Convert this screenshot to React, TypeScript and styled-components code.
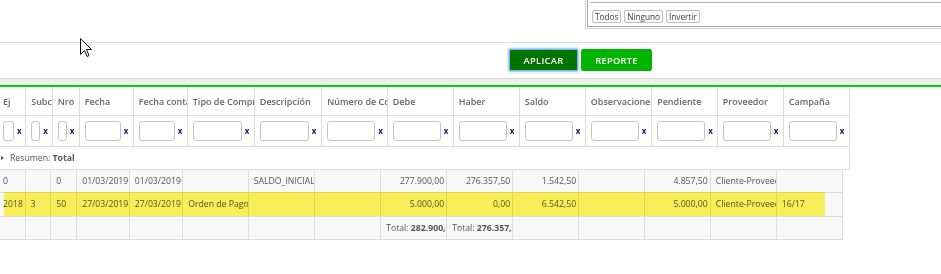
import React from 'react';
import styled, { createGlobalStyle } from 'styled-components';

type Col = { label: string; w: number; iw: number };

const headCols: Col[] = [
	{ label: 'Ej', w: 27.7, iw: 9 },
	{ label: 'Subcuenta', w: 26.6, iw: 7 },
	{ label: 'Nro', w: 27, iw: 7 },
	{ label: 'Fecha', w: 54, iw: 34 },
	{ label: 'Fecha contable', w: 54, iw: 34 },
	{ label: 'Tipo de Comprobante', w: 67, iw: 47 },
	{ label: 'Descripción', w: 67.4, iw: 47 },
	{ label: 'Número de Comprobante', w: 65.6, iw: 46 },
	{ label: 'Debe', w: 66, iw: 46 },
	{ label: 'Haber', w: 66, iw: 46 },
	{ label: 'Saldo', w: 66, iw: 46 },
	{ label: 'Observaciones', w: 66.4, iw: 46 },
	{ label: 'Pendiente', w: 65.6, iw: 46 },
	{ label: 'Proveedor', w: 66, iw: 46 },
	{ label: 'Campaña', w: 66, iw: 46 },
];

const bodyWidths = [27, 25.7, 26, 52.6, 53.4, 65.6, 66, 66.4, 66, 66, 66, 65.6, 66, 66, 66];
const numeric = [8, 9, 10, 12];

const rows: string[][] = [
	['0', '', '0', '01/03/2019', '01/03/2019', '', 'SALDO_INICIAL', '', '277.900,00', '276.357,50', '1.542,50', '', '4.857,50', 'Cliente-Proveedor', ''],
	['2018', '3', '50', '27/03/2019', '27/03/2019', 'Orden de Pago', '', '', '5.000,00', '0,00', '6.542,50', '', '5.000,00', 'Cliente-Proveedor', '16/17'],
];

const totals: Record<number, string> = { 8: '282.900,00', 9: '276.357,50' };

const App: React.FC = () => {
	return (
		<Page>
			<GlobalStyle />
			<TopBar>
				<ChoicePanel>
					<ChoiceInner>
						<ListStub />
						<ChoiceButtons>
							<SmallButton>Todos</SmallButton>
							<SmallButton>Ninguno</SmallButton>
							<SmallButton>Invertir</SmallButton>
						</ChoiceButtons>
					</ChoiceInner>
				</ChoicePanel>
			</TopBar>
			<ActionBar>
				<ActionButton $dark>APLICAR</ActionButton>
				<ActionButton>REPORTE</ActionButton>
			</ActionBar>
			<Band />
			<GridTable>
				<colgroup>
					{headCols.map((c) => (
						<col key={c.label} style={{ width: c.w }} />
					))}
				</colgroup>
				<tbody>
					<tr>
						{headCols.map((c) => (
							<HeadCell key={c.label}>
								<Clip>{c.label}</Clip>
							</HeadCell>
						))}
					</tr>
					<tr>
						{headCols.map((c) => (
							<FilterCell key={c.label}>
								<FilterBox>
									<FilterInput style={{ width: c.iw }} />
									<Clear>x</Clear>
								</FilterBox>
							</FilterCell>
						))}
					</tr>
				</tbody>
			</GridTable>
			<SummaryRow>
				<Caret />
				<span>
					Resumen: <b>Total</b>
				</span>
			</SummaryRow>
			<BodyWrap>
				<BodyTable>
					<colgroup>
						{bodyWidths.map((w, i) => (
							<col key={i} style={{ width: w }} />
						))}
					</colgroup>
					<tbody>
						{rows.map((r, ri) => (
							<BodyRow key={ri} $h={ri === 0 ? 22 : 24}>
								{r.map((v, ci) => (
									<Cell key={ci} $right={numeric.includes(ci)}>
										<Clip>{v}</Clip>
									</Cell>
								))}
							</BodyRow>
						))}
						<BodyRow $h={23}>
							{bodyWidths.map((_, ci) => (
								<Cell key={ci}>
									{totals[ci] && (
										<Clip>
											Total: <b>{totals[ci]}</b>
										</Clip>
									)}
								</Cell>
							))}
						</BodyRow>
					</tbody>
				</BodyTable>
				<Highlight />
			</BodyWrap>
			<Pointer width="13" height="20" viewBox="0 0 13 20">
				<path
					d="M0.5 0.5 L0.5 16.5 L4.5 12.5 L7 18.5 L9 17.5 L6.5 11.5 L11.5 11.5 Z"
					fill="#fff"
					stroke="#111"
					strokeWidth="1"
				/>
			</Pointer>
		</Page>
	);
};

export default App;

const GlobalStyle = createGlobalStyle`
	body {
		margin: 0;
		background: #fff;
		font-family: 'Open Sans', 'Liberation Sans', sans-serif;
		overflow: hidden;
	}
`;

const Page = styled.div`
	position: relative;
	width: 941px;
	height: 274px;
	overflow: hidden;
	background: #fff;
`;

const TopBar = styled.div`
	height: 42px;
	border-bottom: 1px solid #dcdcdc;
	display: flex;
	align-items: flex-start;
`;

const ChoicePanel = styled.div`
	margin-left: 585px;
	width: 420px;
	flex-shrink: 0;
	border: 1px solid #d2d2d2;
	border-top: none;
	padding: 0 1px 1px 1px;
`;

const ChoiceInner = styled.div`
	border: 1px solid #a4a4a4;
	border-top: none;
`;

const ListStub = styled.div`
	height: 2px;
	margin-left: 2px;
	border-bottom: 1px solid #b4b4b4;
`;

const ChoiceButtons = styled.div`
	display: flex;
	gap: 3px;
	padding: 7px 0 3px 4px;
`;

const SmallButton = styled.button`
	height: 13px;
	padding: 0 2px;
	border: 1px solid #bdbdbd;
	border-radius: 2px;
	background: #fbfbfb;
	color: #444;
	font-family: 'Open Sans', sans-serif;
	font-size: 8.4px;
	line-height: 11px;
	letter-spacing: -0.1px;
`;

const ActionBar = styled.div`
	height: 35px;
	display: flex;
	align-items: flex-start;
	gap: 3px;
	padding: 6px 0 0 509px;
	box-sizing: border-box;
`;

const ActionButton = styled.button<{ $dark?: boolean }>`
	height: 22px;
	width: ${({ $dark }) => ($dark ? '69px' : '71px')};
	border: 1px solid ${({ $dark }) => ($dark ? '#7fb2f0' : '#00b400')};
	border-radius: 2px;
	background: ${({ $dark }) => ($dark ? '#007400' : '#00b400')};
	box-shadow: ${({ $dark }) => ($dark ? '0 0 2px 1px rgba(110, 160, 230, 0.7)' : 'none')};
	color: #fff;
	font-family: 'Open Sans', sans-serif;
	font-weight: 600;
	font-size: 9.3px;
	letter-spacing: 0.3px;
	padding: 0;
`;

const Band = styled.div`
	height: 6px;
	border-top: 1px solid #d8d8d8;
	border-bottom: 2px solid #00d400;
	background: linear-gradient(#ebebeb, #f5f5f5);
`;

const Clip = styled.span`
	display: block;
	overflow: hidden;
	white-space: nowrap;
	text-overflow: clip;
`;

const GridTable = styled.table`
	table-layout: fixed;
	border-collapse: collapse;
	margin-left: -2px;
	width: 851.6px;
	color: #666;
`;

const HeadCell = styled.td`
	height: 28px;
	padding: 0 0 0 5px;
	border-right: 1px solid #dcdcdc;
	border-bottom: 1px solid #dcdcdc;
	font-size: 9px;
	font-weight: 600;
	overflow: hidden;
`;

const FilterCell = styled.td`
	height: 30px;
	padding: 0 0 0 5px;
	border-right: 1px solid #dcdcdc;
	border-bottom: 1px solid #dcdcdc;
	overflow: hidden;
`;

const FilterBox = styled.div`
	display: flex;
	align-items: center;
	gap: 3px;
`;

const FilterInput = styled.div`
	height: 18px;
	border: 1px solid #c4c4c4;
	border-radius: 3px;
	background: #fff;
	flex-shrink: 0;
`;

const Clear = styled.span`
	font-size: 8px;
	font-weight: 700;
	color: #152060;
	line-height: 1;
`;

const SummaryRow = styled.div`
	margin-left: -2px;
	width: 852px;
	height: 23px;
	box-sizing: border-box;
	border-right: 1px solid #dcdcdc;
	border-bottom: 1px solid #dcdcdc;
	display: flex;
	align-items: center;
	gap: 6px;
	padding-left: 3px;
	font-size: 8.7px;
	color: #555;
	b {
		font-weight: 700;
	}
`;

const Caret = styled.span`
	width: 0;
	height: 0;
	border-top: 2.5px solid transparent;
	border-bottom: 2.5px solid transparent;
	border-left: 3px solid #555;
`;

const BodyWrap = styled.div`
	position: relative;
`;

const BodyTable = styled.table`
	table-layout: fixed;
	border-collapse: collapse;
	margin-left: -2px;
	width: 844.3px;
	color: #555;
`;

const BodyRow = styled.tr<{ $h: number }>`
	height: ${({ $h }) => $h}px;
	background: #f8f8f8;
`;

const Cell = styled.td<{ $right?: boolean }>`
	padding: 0 ${({ $right }) => ($right ? '2px' : '0')} 0 5px;
	text-align: ${({ $right }) => ($right ? 'right' : 'left')};
	border-right: 1px solid #dcdcdc;
	border-bottom: 1px solid #dcdcdc;
	font-size: 8.7px;
	overflow: hidden;
	b {
		font-weight: 700;
	}
`;

const Highlight = styled.div`
	position: absolute;
	left: 4px;
	top: 22px;
	width: 821px;
	height: 24px;
	background: #fff55c;
	mix-blend-mode: multiply;
	pointer-events: none;
`;

const Pointer = styled.svg`
	position: absolute;
	left: 80px;
	top: 38px;
`;
